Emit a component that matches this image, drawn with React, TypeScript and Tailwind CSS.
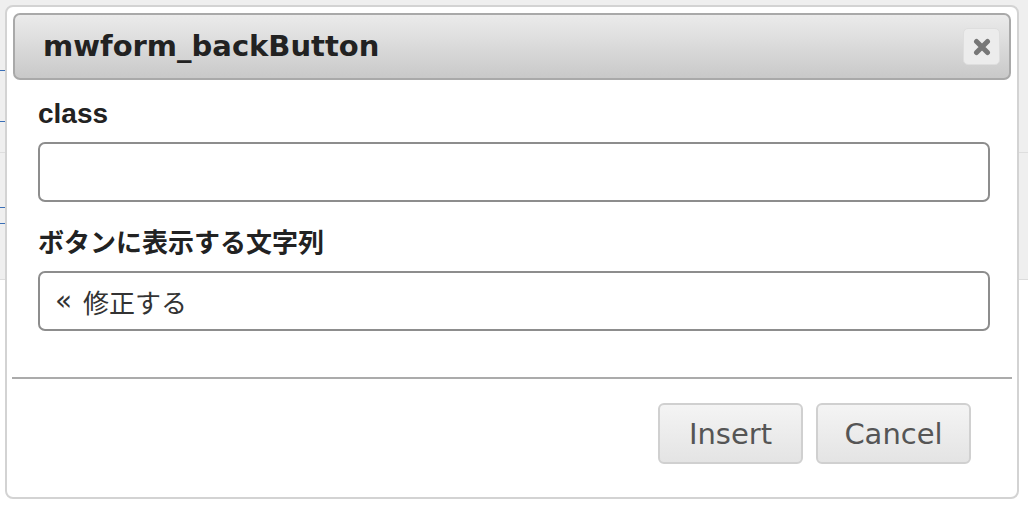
import React from "react";

const latin = { fontFamily: '"DejaVu Sans", Verdana, sans-serif' };
const label = { fontFamily: '"Liberation Sans", "Noto Sans CJK JP", sans-serif' };
const cjk = { fontFamily: '"Noto Sans CJK JP", sans-serif' };

function CloseIcon() {
  return (
    <svg width="18" height="18" viewBox="0 0 18 18" aria-hidden>
      <path d="M3.5 3.5 L14.5 14.5 M14.5 3.5 L3.5 14.5" stroke="#777" strokeWidth="5" strokeLinecap="round" />
    </svg>
  );
}

function Field({ title, children, big }: { title: string; children?: React.ReactNode; big?: boolean }) {
  return (
    <div className="flex flex-col">
      <div
        className={big ? "h-[32px] text-[28px] leading-[32px] font-bold text-[#222]" : "h-[32px] text-[26px] leading-[32px] font-bold text-[#222]"}
        style={label}
      >
        {title}
      </div>
      <div
        className="mt-[12px] h-[60px] w-[952px] rounded-[7px] border-2 border-[#8d8d8d] bg-white flex items-center pl-[15px] text-[26px] text-[#333]"
        style={cjk}
      >
        {children}
      </div>
    </div>
  );
}

export default function App() {
  return (
    <div className="relative h-[508px] w-[1028px] overflow-hidden bg-white">
      {/* page behind the dialog */}
      <div className="h-[280px] bg-[#efefef] border-b border-[#dcdcdc] flex flex-col">
        <div className="mt-[70px] h-px w-[6px] bg-[#3b6fb6]" />
        <div className="mt-[50px] h-px w-[6px] bg-[#3b6fb6]" />
        <div className="mt-[30px] h-px w-full bg-[#dedede]" />
        <div className="mt-[54px] h-px w-[6px] bg-[#3b6fb6]" />
        <div className="mt-[15px] h-px w-[6px] bg-[#3b6fb6]" />
      </div>

      {/* dialog overlay */}
      <div className="absolute left-[5px] top-[5px] w-[1014px] h-[494px] rounded-[8px] border-2 border-[#d3d3d3] bg-white flex flex-col">
        <div className="mx-[6px] mt-[6px] h-[67px] rounded-[7px] border-2 border-[#a9a9a9] bg-gradient-to-b from-[#ebebeb] to-[#c9c9c9] flex items-center justify-between pl-[28px] pr-[9px]">
          <span className="text-[29px] font-bold text-[#222] pt-[1px]" style={latin}>
            mwform_backButton
          </span>
          <div className="w-[37px] h-[37px] rounded-[5px] bg-[#ececec] border border-[#dedede] flex items-center justify-center">
            <CloseIcon />
          </div>
        </div>

        <div className="pl-[31px] pt-[18px] flex flex-col gap-[25px]">
          <Field title="class" big />
          <Field title="ボタンに表示する文字列">
            <span className="inline-block w-[28px] text-[28px] leading-none" style={latin}>«</span>
            <span>修正する</span>
          </Field>
        </div>

        <div className="mx-[5px] mt-[46px] h-[2px] bg-[#ababab]" />

        <div className="mt-[24px] flex justify-end gap-[13px] pr-[46px]">
          <button
            className="w-[145px] h-[61px] rounded-[6px] border-2 border-[#d0d0d0] bg-gradient-to-b from-[#f4f4f4] to-[#e4e4e4] text-[29px] text-[#555] pt-[3px]"
            style={latin}
          >
            Insert
          </button>
          <button
            className="w-[155px] h-[61px] rounded-[6px] border-2 border-[#d0d0d0] bg-gradient-to-b from-[#f4f4f4] to-[#e4e4e4] text-[29px] text-[#555] pt-[3px]"
            style={latin}
          >
            Cancel
          </button>
        </div>
      </div>
    </div>
  );
}
